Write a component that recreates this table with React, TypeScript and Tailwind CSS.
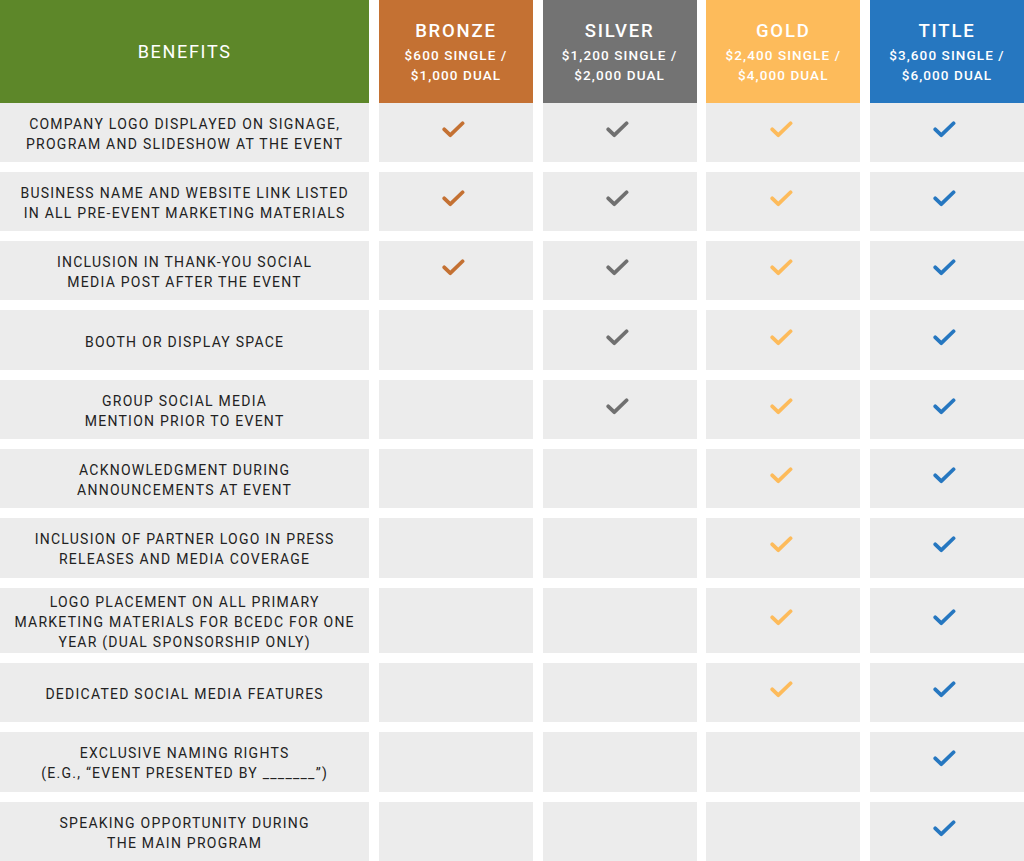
import React from "react";

type Tier = "bronze" | "silver" | "gold" | "title";

const tiers: { key: Tier; name: string; single: string; dual: string; bg: string; check: string }[] = [
  { key: "bronze", name: "BRONZE", single: "$600 SINGLE /", dual: "$1,000 DUAL", bg: "bg-[#c47133]", check: "text-[#c47133]" },
  { key: "silver", name: "SILVER", single: "$1,200 SINGLE /", dual: "$2,000 DUAL", bg: "bg-[#737373]", check: "text-[#707070]" },
  { key: "gold", name: "GOLD", single: "$2,400 SINGLE /", dual: "$4,000 DUAL", bg: "bg-[#fdbb5b]", check: "text-[#fdbb5b]" },
  { key: "title", name: "TITLE", single: "$3,600 SINGLE /", dual: "$6,000 DUAL", bg: "bg-[#2677c0]", check: "text-[#2677c0]" },
];

const benefits: { lines: string[]; has: Tier[]; tall?: boolean }[] = [
  { lines: ["COMPANY LOGO DISPLAYED ON SIGNAGE,", "PROGRAM AND SLIDESHOW AT THE EVENT"], has: ["bronze", "silver", "gold", "title"] },
  { lines: ["BUSINESS NAME AND WEBSITE LINK LISTED", "IN ALL PRE-EVENT MARKETING MATERIALS"], has: ["bronze", "silver", "gold", "title"] },
  { lines: ["INCLUSION IN THANK-YOU SOCIAL", "MEDIA POST AFTER THE EVENT"], has: ["bronze", "silver", "gold", "title"] },
  { lines: ["BOOTH OR DISPLAY SPACE"], has: ["silver", "gold", "title"] },
  { lines: ["GROUP SOCIAL MEDIA", "MENTION PRIOR TO EVENT"], has: ["silver", "gold", "title"] },
  { lines: ["ACKNOWLEDGMENT DURING", "ANNOUNCEMENTS AT EVENT"], has: ["gold", "title"] },
  { lines: ["INCLUSION OF PARTNER LOGO IN PRESS", "RELEASES AND MEDIA COVERAGE"], has: ["gold", "title"] },
  {
    lines: ["LOGO PLACEMENT ON ALL PRIMARY", "MARKETING MATERIALS FOR BCEDC FOR ONE", "YEAR (DUAL SPONSORSHIP ONLY)"],
    has: ["gold", "title"],
    tall: true,
  },
  { lines: ["DEDICATED SOCIAL MEDIA FEATURES"], has: ["gold", "title"] },
  { lines: ["EXCLUSIVE NAMING RIGHTS", "(E.G., “EVENT PRESENTED BY _______”)"], has: ["title"] },
  { lines: ["SPEAKING OPPORTUNITY DURING", "THE MAIN PROGRAM"], has: ["title"] },
];

const Check: React.FC<{ color: string }> = ({ color }) => (
  <svg viewBox="0 0 24 18" className={`w-[23px] h-[17px] mb-[6px] mr-[4px] ${color}`} fill="none">
    <path d="M2.2 8.8 L8.6 15 L21.6 2.4" stroke="currentColor" strokeWidth="4" strokeLinecap="round" strokeLinejoin="round" />
  </svg>
);

export default function App() {
  return (
    <div className="w-[1024px] h-[861px] overflow-hidden bg-white font-[Roboto,sans-serif]">
      <div className="grid grid-cols-[369.3px_repeat(4,1fr)] gap-x-[9.6px] h-[102.5px]">
        <div className="bg-[#5d8729] flex items-center justify-center text-white text-[18px] tracking-[1.7px]">
          BENEFITS
        </div>
        {tiers.map((t) => (
          <div key={t.key} className={`${t.bg} flex flex-col items-center justify-center text-white pt-[2px]`}>
            <span className="text-[18.5px] font-medium tracking-[1.8px] leading-[22px]">{t.name}</span>
            <span className="text-[13.5px] font-medium tracking-[1.1px] leading-[20px] mt-[3px]">{t.single}</span>
            <span className="text-[13.5px] font-medium tracking-[1.1px] leading-[20px]">{t.dual}</span>
          </div>
        ))}
      </div>
      <div className="flex flex-col gap-[10px]">
        {benefits.map((b, i) => (
          <div
            key={i}
            className={`grid grid-cols-[369.3px_repeat(4,1fr)] gap-x-[9.6px] ${b.tall ? "h-[65.4px]" : "h-[59.3px]"}`}
          >
            <div className="bg-[#ececec] flex flex-col items-center justify-center pt-[3px] text-[#222] text-[14px] leading-[20px] tracking-[1.25px] text-center">
              {b.lines.map((l, j) => (
                <span key={j}>{l}</span>
              ))}
            </div>
            {tiers.map((t) => (
              <div key={t.key} className="bg-[#ececec] flex items-center justify-center">
                {b.has.includes(t.key) && <Check color={t.check} />}
              </div>
            ))}
          </div>
        ))}
      </div>
    </div>
  );
}
